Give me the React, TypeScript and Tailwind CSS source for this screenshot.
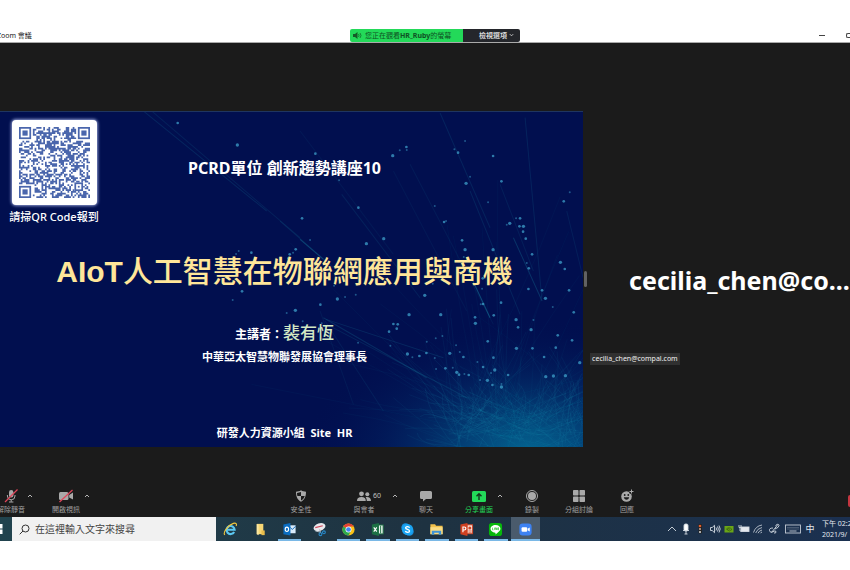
import React from "react";

const uiFont =
  "font-['Noto_Sans','Noto_Sans_CJK_TC',sans-serif]";

function makeRandom(seed: number) {
  let s = seed;
  return () => {
    s = (s * 1664525 + 1013904223) % 4294967296;
    return s / 4294967296;
  };
}

/* ---------- QR code ---------- */

const QR_SIZE = 41;

function qrPath() {
  const rnd = makeRandom(29);
  let d = "";
  for (let y = 0; y < QR_SIZE; y++) {
    for (let x = 0; x < QR_SIZE; x++) {
      const on = rnd() > 0.49;
      const inFinder =
        (x < 8 && y < 8) || (x > 32 && y < 8) || (x < 8 && y > 32);
      const inAlign = x > 31 && x < 37 && y > 31 && y < 37;
      if (on && !inFinder && !inAlign) d += `M${x} ${y}h1v1h-1z`;
    }
  }
  return d;
}

function QrCode() {
  return (
    <svg
      viewBox="0 0 41 41"
      className="h-[71px] w-[71px]"
      fill="#4a66ac"
      role="img"
      aria-label="QR Code"
    >
      <path d={qrPath()} />
      {[
        [0, 0],
        [34, 0],
        [0, 34],
      ].map(([x, y]) => (
        <g key={`${x}-${y}`}>
          <rect x={x + 0.5} y={y + 0.5} width="6" height="6" fill="none" stroke="#4a66ac" />
          <rect x={x + 2} y={y + 2} width="3" height="3" />
        </g>
      ))}
      <rect x="32.5" y="32.5" width="4" height="4" fill="none" stroke="#4a66ac" />
      <rect x="34" y="34" width="1" height="1" />
    </svg>
  );
}

/* ---------- Slide background ---------- */

const dots: [number, number, number][] = [
  [1178, 134, 5], [1199, 118, 3], [1219, 108, 4], [1220, 117, 3], [946, 128, 4],
  [1395, 90, 3], [1363, 115, 3], [1374, 125, 4], [1479, 135, 4], [1410, 197, 3],
  [1398, 217, 5], [1504, 211, 4], [1464, 274, 3], [1304, 285, 3], [1709, 244, 3],
  [1691, 271, 4], [1017, 208, 3], [1075, 290, 4], [906, 322, 4], [930, 387, 3],
  [1332, 333, 4], [1338, 330, 3], [1548, 322, 3], [1560, 322, 4], [1529, 337, 5],
  [1520, 341, 3], [1558, 346, 4], [1570, 346, 5], [1569, 362, 4], [1577, 383, 4],
  [1151, 383, 5], [1099, 398, 5], [1386, 388, 4], [1395, 416, 5], [1479, 416, 5],
  [1596, 430, 4], [1391, 438, 3], [1580, 456, 3], [1586, 472, 4], [1681, 454, 5],
  [1694, 474, 4], [1448, 502, 4], [1585, 534, 4], [1626, 538, 4], [1707, 538, 4],
  [1446, 533, 3], [1274, 553, 5], [1012, 564, 5], [1035, 558, 3], [1067, 551, 3],
  [961, 581, 4], [1002, 524, 3], [1298, 518, 3], [1636, 562, 5], [1503, 575, 4],
  [1442, 580, 3], [1449, 579, 4], [1658, 588, 3], [1721, 604, 4], [1227, 611, 5],
  [1322, 611, 5], [1481, 613, 4], [1425, 619, 4], [1426, 637, 5], [1548, 626, 5],
  [1600, 627, 3], [1180, 639, 4], [1193, 640, 4], [1190, 653, 4], [1167, 662, 4],
  [1554, 649, 4], [1593, 656, 5], [1673, 673, 4], [1327, 675, 3], [1307, 682, 3],
  [1280, 692, 3], [1463, 691, 4], [1716, 688, 4], [1074, 695, 3], [1171, 704, 3],
  [1368, 703, 3], [1549, 712, 5], [1597, 712, 4], [1667, 710, 4], [1379, 723, 3],
  [1222, 729, 5], [1258, 735, 4], [1279, 726, 4], [1237, 739, 3], [1349, 727, 5],
  [1304, 741, 3], [1390, 738, 4], [1480, 740, 4], [1632, 738, 4], [1432, 753, 3],
  [1739, 755, 5], [1449, 768, 4], [1308, 774, 3], [1336, 772, 4], [1358, 770, 3],
  [1370, 784, 5], [1377, 791, 4], [1393, 789, 3], [1406, 792, 4], [1484, 777, 5],
  [1473, 786, 3], [1440, 807, 3], [1462, 808, 5], [1524, 792, 4], [1504, 819, 3],
  [1504, 828, 5], [1477, 822, 4], [1637, 797, 5], [1660, 795, 5], [1696, 794, 5],
  [533, 36, 4], [712, 102, 5], [716, 420, 3], [708, 429, 3], [754, 425, 4],
  [887, 415, 4], [879, 425, 3], [869, 430, 4], [865, 442, 4], [726, 541, 4],
  [698, 567, 3], [886, 598, 5], [860, 606, 3], [965, 637, 3], [908, 631, 3],
];

const rays: [number, number, number, number, number][] = [
  [430, 0, 800, 300, 0.28], [455, 0, 900, 380, 0.22], [840, 330, 1000, 470, 0.25],
  [1320, 6, 1470, 350, 0.25], [1575, 20, 1625, 560, 0.25], [1230, 160, 1480, 640, 0.15],
  [1410, 240, 1560, 610, 0.25], [1400, 470, 1470, 620, 0.75], [1540, 380, 1626, 570, 0.45],
  [1025, 250, 1260, 560, 0.22], [900, 60, 1180, 430, 0.12], [970, 620, 1280, 800, 0.35],
  [980, 640, 1400, 860, 0.25], [975, 630, 1150, 900, 0.18], [900, 385, 970, 445, 0.6],
  [1500, 220, 1600, 480, 0.2], [1180, 180, 1400, 600, 0.12], [1700, 300, 1749, 500, 0.2],
  [978, 625, 1330, 740, 0.3], [960, 600, 1060, 880, 0.14],
];

function fineLines(seed: number, count: number, reach: number) {
  const rnd = makeRandom(seed);
  let d = "";
  for (let i = 0; i < count; i++) {
    const cx = 1340 + rnd() * 440;
    const cy = 900 + rnd() * 130;
    const a = Math.PI * (0.98 + rnd() * 0.95);
    const len = reach * (0.3 + rnd() * 0.7);
    const ex = cx + Math.cos(a) * len;
    const ey = cy + Math.sin(a) * len;
    const mx = (cx + ex) / 2 + (rnd() - 0.5) * 90;
    const my = (cy + ey) / 2 + (rnd() - 0.5) * 60;
    d += `M${cx.toFixed(0)} ${cy.toFixed(0)}Q${mx.toFixed(0)} ${my.toFixed(0)} ${ex.toFixed(0)} ${ey.toFixed(0)}`;
  }
  return d;
}

function SlideBackground() {
  return (
    <svg
      viewBox="0 0 1749 1008"
      preserveAspectRatio="xMaxYMax slice"
      className="absolute inset-0 h-full w-full"
      aria-hidden="true"
    >
      <defs>
        <radialGradient id="glow" gradientUnits="userSpaceOnUse" cx="1590" cy="1030" r="680" gradientTransform="translate(0 412) scale(1 0.6)">
          <stop offset="0" stopColor="#046d97" stopOpacity="0.95" />
          <stop offset="0.3" stopColor="#045587" stopOpacity="0.7" />
          <stop offset="0.65" stopColor="#03306c" stopOpacity="0.32" />
          <stop offset="1" stopColor="#000f50" stopOpacity="0" />
        </radialGradient>
      </defs>
      <rect width="1749" height="1008" fill="#010f4f" />
      <rect width="1749" height="1008" fill="url(#glow)" />
      <g fill="none" stroke="#1f9dbb">
        <path d={fineLines(11, 70, 800)} strokeWidth="2" opacity="0.07" />
        <path d={fineLines(5, 90, 400)} strokeWidth="2" opacity="0.11" />
        <path d={fineLines(8, 90, 220)} strokeWidth="2" opacity="0.15" />
      </g>
      {rays.map(([x1, y1, x2, y2, o], i) => (
        <line key={i} x1={x1} y1={y1} x2={x2} y2={y2} stroke="#167699" strokeWidth="3" opacity={o * 0.75} />
      ))}
      {dots.map(([x, y, r], i) => (
        <circle key={i} cx={x} cy={y} r={r} fill="#3e9fc9" opacity={r > 3 ? 0.75 : 0.5} />
      ))}
    </svg>
  );
}

function Slide() {
  return (
    <section className="relative aspect-[583/336] w-[583px] max-w-[68.6%] shrink-0 grow overflow-hidden border-t border-[#1f3560] text-white">
      <SlideBackground />
      <figure className="absolute top-2 left-2 flex w-[92px] flex-col items-center">
        <div className="flex h-[85px] w-[85px] items-center justify-center rounded-sm bg-white shadow-[0_0_3px_1px_#8f9bd0]">
          <QrCode />
        </div>
        <figcaption className="mt-1 text-[11px] leading-4 font-medium whitespace-nowrap">請掃QR Code報到</figcaption>
      </figure>
      <div className="relative flex flex-col items-center pt-11 pr-[14px] font-bold whitespace-nowrap">
        <h2 className="text-base leading-6">PCRD單位 創新趨勢講座10</h2>
        <h1 className="mt-[72px] font-['Liberation_Sans','Noto_Sans_CJK_TC',sans-serif] text-[30px] leading-10 text-[#ffe699]">
          AIoT<span className="font-medium">人工智慧在物聯網應用與商機</span>
        </h1>
        <p className="mt-[29px] text-xs leading-6">
          主講者：<span className="text-[17px] font-medium text-[#d3e8c4]">裴有恆</span>
        </p>
        <p className="text-[11px] leading-5">中華亞太智慧物聯發展協會理事長</p>
        <p className="mt-14 text-[11px] leading-5 whitespace-pre">研發人力資源小組  Site  HR</p>
      </div>
    </section>
  );
}

/* ---------- Zoom toolbar ---------- */

function Icon({ children, w = 14 }: { children: React.ReactNode; w?: number }) {
  return (
    <svg viewBox={`0 0 ${w} 14`} width={w} height="14" fill="#a9a9a9" aria-hidden="true">
      {children}
    </svg>
  );
}

function Tool({
  label,
  className,
  labelClass = "text-[#a0a0a0]",
  children,
}: {
  label: string;
  className: string;
  labelClass?: string;
  children: React.ReactNode;
}) {
  return (
    <button type="button" className={`flex shrink-0 flex-col items-center pt-0.5 ${className}`}>
      <span className="relative block h-[14px]">{children}</span>
      <span className={`text-[7px] leading-[14px] whitespace-nowrap ${labelClass}`}>{label}</span>
    </button>
  );
}

function Caret({ label }: { label: string }) {
  return (
    <button type="button" aria-label={label} className="flex w-[10px] shrink-0 justify-center pt-[7px]">
      <svg viewBox="0 0 6 4" width="6" height="4" fill="none" stroke="#b5b5b5" aria-hidden="true">
        <path d="M1 3l2-2 2 2" />
      </svg>
    </button>
  );
}

function Toolbar() {
  return (
    <nav aria-label="會議控制" className="flex h-[30px] items-start overflow-hidden bg-[#1b1b1b]">
      <Tool label="解除靜音" className="-ml-[3px] w-7">
        <Icon>
          <rect x="5" y="1" width="4.4" height="7.5" rx="2.2" />
          <path d="M3.4 6v1a3.8 3.8 0 0 0 7.6 0V6M7.2 10.8v2M5 13h4.4" fill="none" stroke="#a9a9a9" />
          <path d="M1 13L13.5 .5" stroke="#e0455a" strokeWidth="1.2" />
        </Icon>
      </Tool>
      <Caret label="音訊選項" />
      <Tool label="開啟視訊" className="ml-[15px] w-8">
        <Icon w={16}>
          <rect x="1" y="3" width="9.5" height="8" rx="1.5" />
          <path d="M11.2 6l3.8-2.4v7L11.2 8.4z" />
          <path d="M1.5 13L14.5 1" stroke="#e0455a" strokeWidth="1.2" />
        </Icon>
      </Tool>
      <Caret label="視訊選項" />
      <div className="grow-[183]" />
      <Tool label="安全性" className="w-[52px]">
        <Icon>
          <path d="M7 1.200c1.500 1 3.200 1.400 5 1.500 0 5-1.500 8-5 10-3.500-2-5-5-5-10 1.800-.1 3.500-.5 5-1.500z" />
          <path d="M7 3v4H3.400C3.100 6 3 5 3 3.900 4.500 3.800 5.800 3.500 7 3zM7 7h3.700c-.6 2-1.800 3.500-3.700 4.600z" fill="#1b1b1b" />
        </Icon>
      </Tool>
      <Tool label="與會者" className="ml-[11px] w-[52px]">
        <Icon w={16}>
          <circle cx="5.500" cy="4.800" r="2.400" />
          <circle cx="11.300" cy="5.200" r="2" />
          <path d="M1 12c0-3 1.500-4 4.500-4S9.800 9 9.800 12zM10.800 12c0-1.700-.4-2.900-1.200-3.800 3.300-.5 5.400.6 5.400 3.800z" />
        </Icon>
        <span className="absolute top-0.5 left-[17px] text-[7px] leading-[10px] text-[#c2c2c2]">60</span>
      </Tool>
      <Caret label="與會者選項" />
      <Tool label="聊天" className="w-[52px]">
        <Icon>
          <path d="M2.500 2h9A1.500 1.500 0 0 1 13 3.500v5a1.500 1.500 0 0 1-1.500 1.500H7l-3 2.600V10H2.500A1.500 1.500 0 0 1 1 8.500v-5A1.500 1.500 0 0 1 2.500 2z" />
        </Icon>
      </Tool>
      <Tool label="分享畫面" className="ml-[11px] w-8" labelClass="text-[#23d559]">
        <Icon>
          <rect x="0" y="2" width="14" height="11" rx="1.500" fill="#23d959" />
          <path d="M7 11V5M4.500 7.200L7 4.700l2.500 2.500" fill="none" stroke="#14351d" strokeWidth="1.400" />
        </Icon>
      </Tool>
      <Caret label="分享選項" />
      <Tool label="錄製" className="w-[54px]">
        <Icon>
          <circle cx="7" cy="7" r="5.500" fill="none" stroke="#a9a9a9" />
          <circle cx="7" cy="7" r="4" />
        </Icon>
      </Tool>
      <Tool label="分組討論" className="w-10">
        <Icon>
          <rect x="1" y="1" width="5.500" height="5.500" rx=".7" />
          <rect x="7.500" y="1" width="5.500" height="5.500" rx=".7" />
          <rect x="1" y="7.500" width="5.500" height="5.500" rx=".7" />
          <rect x="7.500" y="7.500" width="5.500" height="5.500" rx=".7" />
        </Icon>
      </Tool>
      <Tool label="回應" className="w-14">
        <Icon>
          <circle cx="6.500" cy="7.500" r="5.300" />
          <circle cx="4.700" cy="6" r=".9" fill="#1b1b1b" />
          <circle cx="8.300" cy="6" r=".9" fill="#1b1b1b" />
          <path d="M3.800 8.300h5.400c-.3 1.700-1.300 2.400-2.700 2.400s-2.400-.7-2.700-2.400z" fill="#1b1b1b" />
          <circle cx="11.500" cy="2.500" r="2.500" fill="#1b1b1b" />
          <path d="M11.500 .5v4M9.500 2.500h4" stroke="#a9a9a9" />
        </Icon>
      </Tool>
      <div className="grow-[193]" />
      <button type="button" aria-label="離開" className="mt-2 h-3 w-0.5 rounded-l-sm bg-[#c4353f]" />
    </nav>
  );
}

/* ---------- Windows taskbar ---------- */

const apps: { name: string; open: boolean; active?: boolean; art: React.ReactNode }[] = [
  {
    name: "Internet Explorer",
    open: false,
    art: (
      <g fill="none">
        <path d="M11.9 10.6A4.300 4.300 0 1 1 12.400 8.300H4.500" stroke="#5cc8f2" strokeWidth="2.300" />
        <path d="M2 13.800C-.5 11.500 5 3.500 11 1.500c3-1 3.900.6 3 2.800" stroke="#f3c83d" strokeWidth="1.200" />
      </g>
    ),
  },
  {
    name: "資料夾",
    open: false,
    art: (
      <g>
        <path d="M4 2h7v11H4z" fill="#f7d774" />
        <path d="M9 9h3.500v5H9z" fill="#e9bd4c" />
        <path d="M4 2l2 1v11l-2-1z" fill="#fbe7a3" />
      </g>
    ),
  },
  {
    name: "Outlook",
    open: true,
    art: (
      <g>
        <rect x="8" y="3.500" width="6.500" height="8.500" fill="#d9ebfa" />
        <path d="M8.500 5.500l2.500 2.500 3.500-3.500" fill="none" stroke="#0a68bb" />
        <path d="M1.500 2.600L9 1v13.500L1.500 13z" fill="#0a6dc2" />
        <ellipse cx="5.200" cy="7.800" rx="1.800" ry="2.300" fill="none" stroke="#fff" strokeWidth="1.200" />
      </g>
    ),
  },
  {
    name: "剪取工具",
    open: false,
    art: (
      <g>
        <ellipse cx="8" cy="5.500" rx="6.500" ry="4" transform="rotate(-18 8 5.500)" fill="#e8e9ed" />
        <path d="M3.500 6l8-2" stroke="#d0495a" strokeWidth="1.100" />
        <path d="M3.500 9.500l6 1.500M8 7.500l1 4" stroke="#b9c3cb" />
        <circle cx="9" cy="13" r="1.500" fill="none" stroke="#2889c9" strokeWidth="1.200" />
        <circle cx="12.700" cy="11" r="1.500" fill="none" stroke="#2889c9" strokeWidth="1.200" />
      </g>
    ),
  },
  {
    name: "Chrome",
    open: true,
    art: (
      <g>
        <circle cx="8" cy="8" r="6.500" fill="#fbc116" />
        <path d="M8 8L2.370 4.750A6.500 6.500 0 0 1 13.630 4.750H8z" fill="#e34133" />
        <path d="M2.370 4.750A6.500 6.500 0 0 0 8 14.500L10.600 9.500 8 8z" fill="#2da94f" />
        <circle cx="8" cy="8" r="3.200" fill="#fff" />
        <circle cx="8" cy="8" r="2.500" fill="#4285f4" />
      </g>
    ),
  },
  {
    name: "Excel",
    open: true,
    art: (
      <g>
        <rect x="8.500" y="3.200" width="5.500" height="9.500" fill="#e3f1e9" stroke="#217346" />
        <path d="M11.300 4v8" stroke="#217346" />
        <path d="M2 2.600L9.500 1v13.800L2 13z" fill="#1d7044" />
        <path d="M4 5.700l3.200 4.600M7.200 5.700L4 10.300" stroke="#fff" strokeWidth="1.200" />
      </g>
    ),
  },
  {
    name: "Skype",
    open: true,
    art: (
      <g>
        <circle cx="6" cy="6" r="4.600" fill="#1693e4" />
        <circle cx="10" cy="10" r="4.600" fill="#1693e4" />
        <circle cx="8" cy="8" r="6" fill="#1ba4f2" />
        <path d="M10.200 6.200C9.600 4.400 5.900 4.500 6 6.300c.1 1.900 4.200 1.200 4.200 3.200 0 1.900-3.900 2-4.500.1" fill="none" stroke="#fff" strokeWidth="1.400" />
      </g>
    ),
  },
  {
    name: "檔案總管",
    open: true,
    art: (
      <g>
        <path d="M1.500 2.500h5l1 1.500h7v9h-13z" fill="#f2c14b" />
        <path d="M1.500 5.500h13v7.500h-13z" fill="#fbdc82" />
        <path d="M3 13.500V9.200h10v4.300h-2.600v-2H5.600v2z" fill="#3f94d6" />
      </g>
    ),
  },
  {
    name: "PowerPoint",
    open: true,
    art: (
      <g>
        <rect x="8.500" y="3" width="6" height="9.500" fill="#f8dfd8" stroke="#d04423" />
        <path d="M10 9.500h3.500M10 11h3.500" stroke="#d04423" strokeWidth=".7" />
        <circle cx="11.500" cy="6.500" r="1.600" fill="#d04423" />
        <path d="M1.500 2.600L9 1v13.800L1.500 13z" fill="#cf4021" />
        <path d="M4.200 11V5.300h1.400c2.300 0 2.300 3.200 0 3.200H4.200" fill="none" stroke="#fff" strokeWidth="1.200" />
      </g>
    ),
  },
  {
    name: "LINE",
    open: true,
    art: (
      <g>
        <rect x="1" y="1" width="14" height="14" rx="3" fill="#06b70b" />
        <path d="M8 3.200c3 0 5.300 1.800 5.300 4.100 0 2.200-2.600 3.900-5.300 5.900.1-.9.200-1.700-.4-1.800C4.600 11.100 2.700 9.500 2.700 7.300c0-2.300 2.400-4.100 5.300-4.100z" fill="#fff" />
        <path d="M4.800 6v2.400h1M7 6v2.400M8.200 8.400V6l1.300 2.400V6M11.700 6.200h-1.100v2h1.100M10.600 7.200h1" fill="none" stroke="#06b70b" strokeWidth=".6" />
      </g>
    ),
  },
  {
    name: "Zoom",
    open: true,
    active: true,
    art: (
      <g>
        <rect x="1.500" y="1.500" width="13" height="13" rx="3.500" fill="#3d82f3" />
        <rect x="3.800" y="5.500" width="6" height="5" rx="1.200" fill="#fff" />
        <path d="M10.300 7.300l2.200-1.500v4.400l-2.200-1.500z" fill="#fff" />
      </g>
    ),
  },
];

function TrayIcon({ label, className, children }: { label: string; className: string; children: React.ReactNode }) {
  return (
    <button type="button" aria-label={label} className={`flex shrink-0 justify-center ${className}`}>
      <svg viewBox="0 0 12 12" width="12" height="12" fill="none" stroke="#d5dbe3" strokeWidth="0.9" aria-hidden="true">
        {children}
      </svg>
    </button>
  );
}

function Taskbar() {
  return (
    <footer className="flex h-6 items-stretch overflow-hidden bg-linear-to-r from-[#21434e] via-[#1e3241] to-[#1b3050]">
      <button type="button" aria-label="開始" className="flex w-3 shrink-0 items-center">
        <svg viewBox="0 0 3 10" width="3" height="10" fill="#fff" aria-hidden="true">
          <path d="M0 0h2.500v4.500H0zM0 5.500h2.500V10H0z" />
        </svg>
      </button>
      <label className="flex w-[204px] shrink-0 items-center bg-[#f1f1f1] pl-[7px]">
        <svg viewBox="0 0 11 11" width="11" height="11" fill="none" stroke="#333" aria-label="搜尋" role="img">
          <circle cx="6.500" cy="4.500" r="3.500" />
          <path d="M4 7L.7 10.300" />
        </svg>
        <input
          type="search"
          placeholder="在這裡輸入文字來搜尋"
          className="ml-[5px] w-40 bg-transparent text-[10px] leading-4 text-[#444] outline-none placeholder:text-[#444]"
        />
      </label>
      <ul className="flex w-[324px] shrink-0">
        {apps.map((a) => (
          <li key={a.name} className={`flex flex-1 ${a.active ? "bg-[#4a5b6c]" : ""}`}>
            <button
              type="button"
              aria-label={a.name}
              className={`flex flex-1 items-center justify-center border-b-2 pt-0.5 ${a.open ? "border-[#7ab8e6]" : "border-transparent"} ${a.active ? "" : "mx-[3px]"}`}
            >
              <svg viewBox="0 0 16 16" width="15" height="15" aria-hidden="true">
                {a.art}
              </svg>
            </button>
          </li>
        ))}
      </ul>
      <div className="grow" />
      <div className="flex shrink-0 items-center text-[#e4e8ee]">
        <TrayIcon label="顯示隱藏的圖示" className="w-[15px]">
          <path d="M2 8l4-4 4 4" />
        </TrayIcon>
        <TrayIcon label="麥克風" className="w-[14px]">
          <rect x="4" y="1" width="4" height="7" rx="1.500" fill="#fff" />
          <path d="M3 7.500h6M6 8v3M4.500 11h3" />
        </TrayIcon>
        <TrayIcon label="狀態" className="w-[14px]">
          <rect x="4.500" y="1" width="3.500" height="9.500" rx="1" fill="#222" stroke="none" />
          <circle cx="6" cy="3" r="1.300" fill="#e05b2a" stroke="none" />
          <circle cx="6" cy="6" r="1" fill="#c9a89a" stroke="none" />
          <circle cx="6" cy="9" r="1" fill="#ddd" stroke="none" />
        </TrayIcon>
        <TrayIcon label="音量" className="w-[15px]">
          <path d="M1.500 4.500h1.700L5.500 2.300v7.400L3.200 7.500H1.500zM7 4.500q1 1.500 0 3M8.500 3.500q1.700 2.500 0 5M10 2.500q2.400 3.500 0 7" />
        </TrayIcon>
        <TrayIcon label="NVIDIA" className="w-[14px]">
          <rect x="1.500" y="3" width="9" height="6.500" fill="#6aa517" stroke="none" />
          <path d="M3 6.500q3-3.500 6 0-3 3-5 0 2-1.500 3 0" stroke="#365a0d" strokeWidth=".7" />
        </TrayIcon>
        <TrayIcon label="電池" className="w-[15px]">
          <rect x="3" y="4" width="8" height="4.500" fill="#e4e8ee" />
          <path d="M1 2v2.500h2V2M2 4.500V8h1" />
        </TrayIcon>
        <TrayIcon label="網路" className="w-[14px]">
          <path d="M1.500 9.500q2-6.500 8.500-7.500M3.700 10q1.500-4.500 6.300-5.500M6 10.200q1-2.500 4-3.200M8.300 10.300q.5-1 1.700-1.200" stroke="#b9c2cc" />
        </TrayIcon>
        <TrayIcon label="Windows Ink" className="w-[18px]">
          <path d="M3.500 9.500l6-7.500M7.500 2.500q3-2.500 3.500 0 0 2-4 3.500M5 5Q1 5 1.500 7.500 2 10 4.500 9q3-2 3.500-.5.300 2-2 1.500" />
        </TrayIcon>
        <button type="button" aria-label="觸控式鍵盤" className="flex w-5 shrink-0 justify-center">
          <svg viewBox="0 0 16 10" width="16" height="10" fill="none" stroke="#c3cad4" strokeWidth=".9" aria-hidden="true">
            <rect x=".5" y="1" width="15" height="8" />
            <path d="M2.500 3.500h11M2.500 5h11" strokeDasharray="1 1" opacity=".6" />
            <path d="M4.500 7h7" />
          </svg>
        </button>
        <button type="button" className="w-[14px] text-center text-[9px] leading-4">中</button>
        <time className="ml-[3px] w-[30px] pl-0.5 text-[7px] leading-[11px] whitespace-nowrap">
          下午 02:2<br />2021/9/
        </time>
      </div>
    </footer>
  );
}

/* ---------- Page ---------- */

function TitleBar() {
  return (
    <header className="grid h-[15px] grid-cols-[7fr_auto_6.6fr] items-center overflow-hidden border-b border-[#aaa] bg-white">
      <p className="-ml-[3px] pt-px text-[7px] leading-3 text-[#222]">Zoom 會議</p>
      <div className="flex h-[13px] overflow-hidden rounded-xs text-[7px] leading-[13px] whitespace-nowrap">
        <p className="flex w-[113px] items-center gap-[3px] bg-[#23d959] pl-[3px] text-[#0f5123]">
          <svg viewBox="0 0 9 9" width="9" height="9" fill="#145a27" aria-hidden="true">
            <path d="M0 3h2l2.500-2v7L2 6H0z" />
            <path d="M5.500 3q1 1.500 0 3M7 2q2 2.500 0 5" fill="none" stroke="#145a27" strokeWidth=".7" />
          </svg>
          <span>您正在觀看<b>HR_Ruby</b>的螢幕</span>
        </p>
        <button type="button" className="flex w-[57px] items-center justify-end gap-0.5 bg-[#24262b] pr-1.5 font-bold text-[#dcdcdc]">
          檢視選項
          <svg viewBox="0 0 6 4" width="5" height="4" fill="none" stroke="#dcdcdc" aria-hidden="true">
            <path d="M1 1l2 2 2-2" />
          </svg>
        </button>
      </div>
      <div className="flex items-center justify-end gap-[21px]">
        <button type="button" aria-label="最小化" className="h-px w-[6px] bg-[#444]" />
        <button type="button" aria-label="最大化" className="h-[5px] w-1 rounded-l-xs border border-r-0 border-[#444]" />
      </div>
    </header>
  );
}

export default function App() {
  return (
    <div className={`min-h-screen overflow-hidden bg-white py-7 ${uiFont}`} lang="zh-Hant">
      <TitleBar />
      <main className="flex items-start overflow-hidden bg-[#1b1b1b] pt-[68px] pb-10">
        <Slide />
        <div className="mx-px h-4 w-[3px] shrink-0 self-center rounded-xs bg-[#626262]" />
        <aside className="flex min-w-0 flex-1 flex-col self-stretch pt-[152px] text-white">
          <p className="pl-[41px] text-[25px] leading-[34px] font-bold whitespace-nowrap">cecilia_chen@co...</p>
          <p className="mt-[56px] ml-0.5 self-start bg-[#303030] px-0.5 text-[7px] leading-3 text-[#f0f0f0]">
            cecilia_chen@compal.com
          </p>
        </aside>
      </main>
      <Toolbar />
      <Taskbar />
    </div>
  );
}
